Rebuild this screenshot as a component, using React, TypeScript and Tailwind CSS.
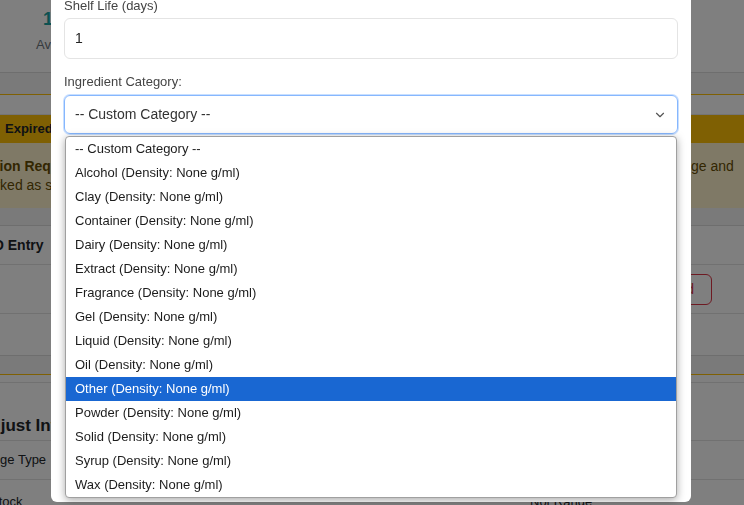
import { ChevronDown } from "lucide-react";

const categories = [
  "Alcohol",
  "Clay",
  "Container",
  "Dairy",
  "Extract",
  "Fragrance",
  "Gel",
  "Liquid",
  "Oil",
  "Other",
  "Powder",
  "Solid",
  "Syrup",
  "Wax",
];

const font = { fontFamily: '"Liberation Sans", Arial, sans-serif' };

// one strip of the page behind the modal: left edge, hidden middle, right edge
function Row({
  className,
  left,
  right,
}: {
  className?: string;
  left?: React.ReactNode;
  right?: React.ReactNode;
}) {
  return (
    <div className={"flex " + (className ?? "")}>
      <div className="w-[51px] shrink-0 overflow-hidden flex items-center whitespace-nowrap">{left}</div>
      <div className="flex-1" />
      <div className="w-[53px] shrink-0 overflow-hidden flex items-center whitespace-nowrap">{right}</div>
    </div>
  );
}

function BackgroundPage() {
  return (
    <div className="w-full h-[505px] bg-[#f4f4f4] text-[#212529] overflow-hidden" style={font}>
      <div className="h-[73px] bg-white border-b border-[#dcdcdc] flex flex-col pt-[6px]">
        <Row left={<span className="ml-[43px] text-[18px] font-bold text-[#1aa3a3]">12</span>} />
        <Row className="mt-[2px]" left={<span className="ml-[36px] text-[13px] text-[#6c757d]">Available</span>} />
      </div>
      <div className="h-[21px]" />
      <div className="border-t border-[#ffc107] bg-white">
        <div className="h-[20px] border-b border-[#e9e9e9]" />
        <Row
          className="h-[28px] bg-[#ffc107] text-[13px] font-bold"
          left={<span className="ml-[5px]">Expired</span>}
        />
        <div className="h-[65px] bg-[#fff3cd] text-[#664d03] text-[14px] leading-[19px] flex flex-col pt-[14px]">
          <Row left={<span className="-ml-[23px] font-bold">Action Required</span>} right={<span>ge and</span>} />
          <Row left={<span className="-ml-[24px]">Marked as spoiled</span>} />
        </div>
      </div>
      <div className="h-[17px]" />
      <div className="bg-white border-y border-[#dcdcdc]">
        <Row
          className="h-[39px] text-[14px] font-bold border-b border-[#e2e2e2]"
          left={<span className="-ml-[28px]">FIFO Entry</span>}
        />
        <Row
          className="h-[49px] border-b border-[#e2e2e2]"
          right={
            <div className="shrink-0 -ml-[40px] w-[61px] h-[31px] rounded-[6px] border border-[#dc3545] text-[#dc3545] text-[14px] flex items-center justify-end pr-[17px]">
              Discard
            </div>
          }
        />
        <div className="h-[41px]" />
      </div>
      <div className="h-[18px]" />
      <div className="border-t border-[#ffc107] bg-white">
        <div className="h-[8px] border-b border-[#e2e2e2]" />
        <Row
          className="h-[58px] items-end pb-[2px] text-[17px] font-bold border-b border-[#e2e2e2]"
          left={<span className="-ml-[22px]">Adjust Inventory</span>}
        />
        <Row
          className="h-[39px] text-[13px] border-b border-[#e2e2e2]"
          left={<span className="-ml-[31px]">Change Type</span>}
        />
        <div className="h-[31px] flex items-end text-[13px]">
          <div className="w-[51px] shrink-0 overflow-hidden whitespace-nowrap">
            <span className="-ml-[10px] inline-block">Stock</span>
          </div>
          <div className="flex-1 pl-[479px]">Not Range</div>
        </div>
      </div>
    </div>
  );
}

export default function App() {
  return (
    <div className="relative w-[744px] h-[505px] overflow-hidden" style={font}>
      <BackgroundPage />
      <div className="fixed inset-0 bg-black/50 flex justify-center">
        <div className="w-[640px] h-[502px] mr-[2px] bg-white rounded-b-[6px] px-[13px] relative">
          <label className="block -mt-[4px] leading-5 text-[13px] text-[#444]">Shelf Life (days)</label>
          <div className="mt-[2px] h-[41px] rounded-[6px] border border-[#e4e4e4] flex items-center pl-[10px] text-[14px] text-[#222]">
            1
          </div>
          <label className="block mt-[13px] leading-5 text-[13px] text-[#444]">Ingredient Category:</label>
          <div className="relative mt-[3px]">
            <div className="h-[39px] rounded-[6px] border border-[#86b7fe] shadow-[0_0_0_1px_rgba(134,183,254,0.45)] flex items-center justify-between pl-[10px] pr-[10px] text-[14px] text-[#333]">
              <span>-- Custom Category --</span>
              <ChevronDown className="w-[14px] h-[14px] text-[#555]" strokeWidth={2} />
            </div>
            <ul className="absolute left-[1px] right-[1px] top-[41px] bg-white border border-[#a0a0a0] rounded-[4px] shadow-[0_2px_8px_rgba(0,0,0,0.35)] text-[13px] text-[#1c1c1c] z-10">
              <li className="h-6 flex items-center pl-[9px]">-- Custom Category --</li>
              {categories.map((c) => (
                <li
                  key={c}
                  className={
                    c === "Other"
                      ? "h-6 flex items-center pl-[9px] bg-[#1967d2] text-white"
                      : "h-6 flex items-center pl-[9px]"
                  }
                >
                  {c} (Density: None g/ml)
                </li>
              ))}
            </ul>
          </div>
        </div>
      </div>
    </div>
  );
}
